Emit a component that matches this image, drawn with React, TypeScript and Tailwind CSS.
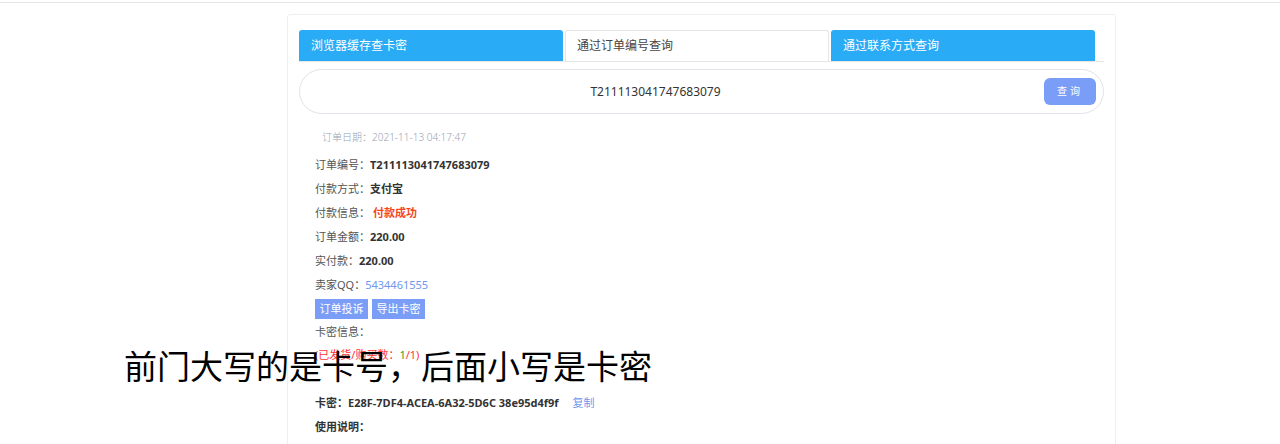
import React from "react";

const cjk = { fontFamily: '"Noto Sans", "Noto Sans CJK SC", sans-serif' };

function Row({ label, children }: { label: string; children: React.ReactNode }) {
  return (
    <div className="flex h-[24px] items-center text-[11px] text-[#555]">
      <span>{label}</span>
      {children}
    </div>
  );
}

export default function App() {
  return (
    <div className="relative min-h-[444px] bg-white" style={cjk}>
      <div className="h-[3px] border-b border-[#e6e6e6]" />
      <div className="ml-[287px] mt-[11px] w-[829px] rounded-[3px] border border-[#eeeeee] px-[11px] pt-[15px] pb-[10px]">
        {/* tabs */}
        <div className="flex h-[32px] gap-[2px] border-b border-[#e6e6e6]">
          <div className="flex w-[264px] items-center rounded-t-[3px] bg-[#29abf6] pl-[12px] text-[12px] text-white">
            浏览器缓存查卡密
          </div>
          <div className="flex w-[264px] items-center rounded-t-[3px] border border-b-0 border-[#e6e6e6] bg-white pl-[11px] text-[12px] text-[#444]">
            通过订单编号查询
          </div>
          <div className="flex w-[264px] items-center rounded-t-[3px] bg-[#29abf6] pl-[12px] text-[12px] text-white">
            通过联系方式查询
          </div>
        </div>

        {/* search */}
        <div className="mt-[7px] flex h-[45px] items-center rounded-full border border-[#e2e2ea] bg-white">
          <div className="flex-1 text-center text-[12px] text-[#333]">T211113041747683079</div>
          <button className="ml-[33px] mr-[7px] h-[27px] w-[52px] rounded-[6px] bg-[#7a9ef7] text-[10px] tracking-[3px] text-white">
            查询
          </button>
        </div>

        {/* details */}
        <div className="mt-[11px] pl-[16px]">
          <div className="flex h-[24px] items-center pl-[7px] text-[10px] font-light text-[#9aa3b3]">
            订单日期：2021-11-13 04:17:47
          </div>
          <div className="mt-[4px]">
            <Row label="订单编号：">
              <span className="font-bold text-[#333]">T211113041747683079</span>
            </Row>
            <Row label="付款方式：">
              <span className="font-bold text-[#333]">支付宝</span>
            </Row>
            <Row label="付款信息：">
              <span className="ml-[3px] font-bold text-[#f5461d]">付款成功</span>
            </Row>
            <Row label="订单金额：">
              <span className="font-bold text-[#333]">220.00</span>
            </Row>
            <Row label="实付款：">
              <span className="font-bold text-[#333]">220.00</span>
            </Row>
            <Row label="卖家QQ：">
              <span className="text-[#6f98ee]">5434461555</span>
            </Row>
          </div>
          <div className="mt-[2px] flex gap-[4px]">
            <span className="flex h-[20px] w-[53px] items-center justify-center bg-[#7a9ef7] text-[11px] text-white">订单投诉</span>
            <span className="flex h-[20px] w-[53px] items-center justify-center bg-[#7a9ef7] text-[11px] text-white">导出卡密</span>
          </div>
          <div className="mt-[1px]">
            <Row label="卡密信息：">{null}</Row>
          </div>
          <div className="flex h-[23px] items-center text-[11px] text-[#f33]">
            (已发货/购买数：<span className="text-[#2e9d1f]">1</span>/1)
          </div>
          <div className="h-[24px]" />
          <div className="flex h-[24px] items-center text-[11px] font-bold text-[#333]">
            卡密：E28F-7DF4-ACEA-6A32-5D6C 38e95d4f9f
            <span className="ml-[14px] font-normal text-[#6f98ee]">复制</span>
          </div>
          <div className="flex h-[24px] items-center text-[11px] font-bold text-[#333]">使用说明：</div>
        </div>
      </div>

      {/* annotation */}
      <div
        className="absolute left-[124px] top-[349px] text-[33px] leading-none text-black"
        style={{ fontFamily: '"Noto Sans CJK SC", sans-serif' }}
      >
        前门大写的是卡号，后面小写是卡密
      </div>
    </div>
  );
}
